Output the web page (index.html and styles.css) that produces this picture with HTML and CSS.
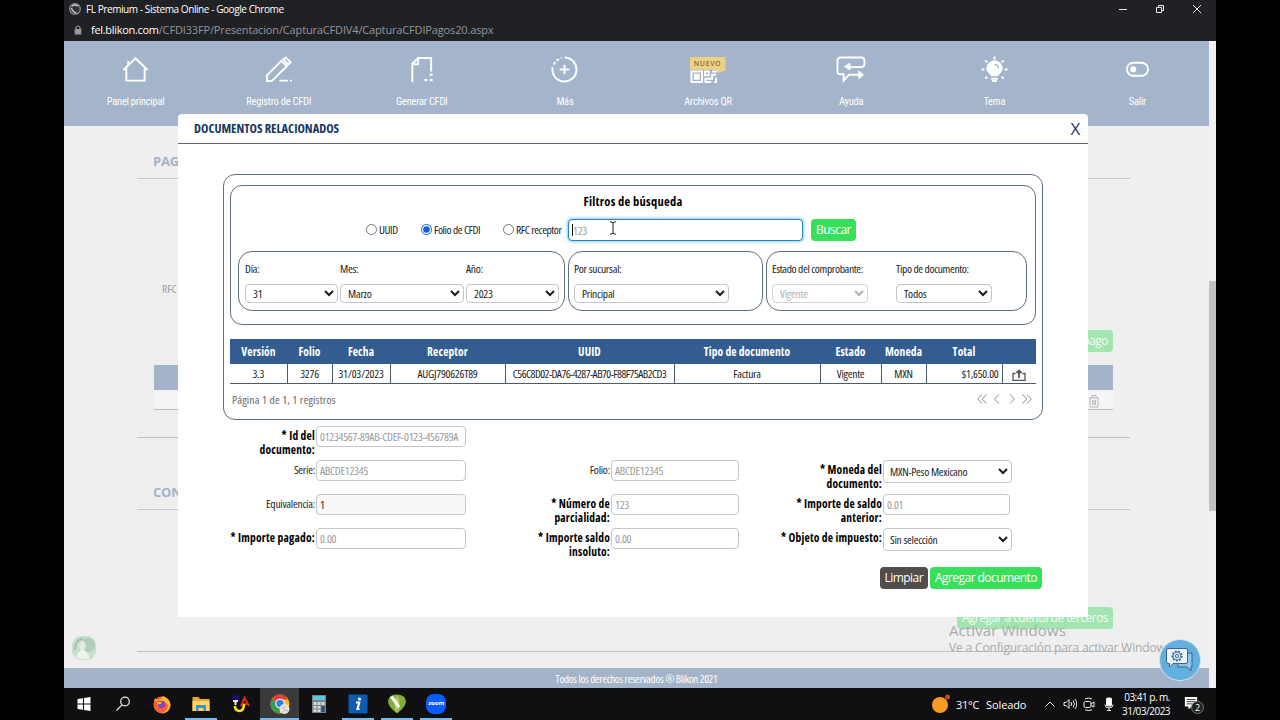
FILE: index.html
```html
<!DOCTYPE html>
<html lang="es">
<head>
  <meta charset="UTF-8" />
  <meta name="viewport" content="width=device-width, initial-scale=1.0"/>
  <title>FL Premium - Sistema Online</title>
  <link rel="stylesheet" href="styles.css">
</head>
<body>
  <div class="screen">
    <!-- browser window -->
    <header class="browser">
      <div class="titlebar">
        <svg class="favicon" viewBox="0 0 14 14"><circle cx="7" cy="7" r="5.3" fill="#333" stroke="#8d8d8f" stroke-width="1.3"/><path d="M4 4q3-2 6 0M3.5 6q1 4 5 5" fill="none" stroke="#ccc" stroke-width="1.3"/></svg>
        <span class="window-title">FL Premium - Sistema Online - Google Chrome</span>
        <div class="window-buttons">
          <svg viewBox="0 0 10 10"><path d="M1 5.5h8"/></svg>
          <svg viewBox="0 0 10 10"><path d="M1.5 3.5h5v5h-5zM3.5 3.5v-2h5v5h-2"/></svg>
          <svg viewBox="0 0 10 10"><path d="M1 1l8 8M9 1l-8 8"/></svg>
        </div>
      </div>
      <div class="urlbar">
        <svg class="lock" viewBox="0 0 8 10"><path d="M2 5V3a2 2 0 0 1 4 0v2" fill="none" stroke="#9a9a9d" stroke-width="1.2"/><rect x=".7" y="4" width="6.6" height="5.5" fill="#9a9a9d"/></svg>
        <p><b>fel.blikon.com</b>/CFDI33FP/Presentacion/CapturaCFDIV4/CapturaCFDIPagos20.aspx</p>
      </div>
    </header>

    <div class="viewport">
      <div class="page">
        <nav class="menu">
          <a><svg viewBox="0 0 28 28"><path d="M1.5 14.5L14 2.500l12.500 12M4.500 13v12.500h19V13M6.500 9V5"/></svg>Panel principal</a>
          <a><svg viewBox="0 0 28 28"><path d="M2 26v-6L17 5l5.500 5.500-15 15zM19 3.500l2.500-2 5 5-2.500 2.500zM15 25.500h9M26 25.500h2"/></svg>Registro de CFDI</a>
          <a><svg viewBox="0 0 28 28"><path d="M4.500 27V8l6-6H24v14M4.500 8.500h6V2"/><path d="M22.500 19.500h3M22.500 25h3M17 25h3" stroke-width="2.500"/></svg>Generar CFDI</a>
          <a><svg viewBox="0 0 28 28"><path d="M14 1.500a12.500 12.500 0 1 1-12.300 10M14 9v10M9 14h10"/><path d="M3 9A12.500 12.500 0 0 1 11 2" stroke-dasharray="3 2"/></svg>Más</a>
          <a class="qr"><svg viewBox="0 0 28 28"><path d="M1.500 16h11v11h-11z"/><path d="M5 19.500h4v4H5z" fill="#fff"/><path d="M15.500 21v-5h4v4h-3M23 16h5M27 19.500h-4v4h-7v3.500h6M27 22.500V27h-2"/></svg>Archivos QR<span class="nuevo">NUEVO</span></a>
          <a><svg viewBox="0 0 32 28"><path d="M10 11.500h16.500a3 3 0 0 0 3-3V4.500a3 3 0 0 0-3-3H4.500a3 3 0 0 0-3 3V16a3 3 0 0 0 3 3H8v6.500l5.500-6H27"/><path d="M14.500 7.500v7L9 11zM23.500 15.500v8L28.500 19.500z" fill="#fff" stroke-width="1"/></svg>Ayuda</a>
          <a><svg viewBox="0 0 28 28"><path d="M10.500 20.500c0-2-4.500-3-4.500-7.500a8 8 0 0 1 16 0c0 4.500-4.500 5.500-4.500 7.500z" fill="#fff" stroke-width="1"/><path d="M10.500 23.500h7M11.500 26h5M14 .5v3M.5 14h3M24.500 14h3M4.500 4.500l2 2M23.500 4.500l-2 2M4.500 23.500l2-2M23.500 23.500l-2-2"/><path d="M14 9q4 0 4.500 4" stroke="#a5b4cb" stroke-width="1.3"/></svg>Tema</a>
          <a><svg viewBox="0 0 28 28"><rect x="3" y="7" width="22" height="13.500" rx="6.700"/><circle cx="9.500" cy="13.700" r="3.200" fill="#fff" stroke="none"/></svg>Salir</a>
        </nav>

        <main class="payment">
          <h2>PAGOS</h2>
          <div class="payment-form">
            <span class="rfc">RFC emisor:</span>
            <button class="btn">Agregar pago</button>
          </div>
          <div class="payment-grid">
            <div class="grid-head"></div>
            <div class="grid-row">
              <svg viewBox="0 0 12 14"><path d="M1 4h10M4 4V1.500h4V4M2 4v9h8V4M4.500 6v5M6 6v5M7.500 6v5" fill="none" stroke="#b9b9ba"/></svg>
            </div>
          </div>
          <hr>
          <h2 class="second">CONCEPTOS</h2>
          <button class="btn account-btn">Agregar a cuenta de terceros</button>
          <hr>
        </main>
        <footer class="footer">Todos los derechos reservados ® Blikon 2021</footer>
      </div>
      <div class="scrollbar"><div class="thumb"></div></div>

      <svg class="avatar" viewBox="0 0 26 26"><rect x="1" y="1" width="24" height="24" rx="9" fill="#c9dfcd"/><circle cx="17" cy="10" r="7" fill="#b1ceb8"/><path d="M5 23q2-7 6-8t8 8q-7 3-14-1" fill="#eef3ec"/><ellipse cx="11.500" cy="11" rx="3" ry="5" fill="#e3eae1"/><path d="M4 15Q4 4 12 4" fill="none" stroke="#a8bfad" stroke-width="2"/></svg>

      <div class="activate">
        <p class="activate-title">Activar Windows</p>
        <p>Ve a Configuración para activar Windows.</p>
      </div>

      <!-- related documents -->
      <section class="modal">
        <div class="modal-header">
          <h3>DOCUMENTOS RELACIONADOS</h3>
          <span class="close">X</span>
        </div>

        <div class="search-box">
          <div class="filters">
            <h4>Filtros de búsqueda</h4>
            <div class="search-row">
              <label class="opt-uuid"><input type="radio" name="tipo" />UUID</label>
              <label class="opt-folio"><input type="radio" name="tipo" checked />Folio de CFDI</label>
              <label class="opt-rfc"><input type="radio" name="tipo" />RFC receptor</label>
              <div class="search-field">
                <input type="text" placeholder="123" />
                <span class="caret"></span>
                <svg class="pointer" viewBox="0 0 8 14"><path d="M1 1h2l1 1 1-1h2M4 2v10M1 13h2l1-1 1 1h2" fill="none" stroke="#222"/></svg>
              </div>
              <button class="btn search-btn">Buscar</button>
            </div>
            <div class="filter-groups">
              <div class="group date-group">
                <label>Día:<select><option>31</option></select></label>
                <label>Mes:<select><option>Marzo</option></select></label>
                <label>Año:<select><option>2023</option></select></label>
              </div>
              <div class="group branch-group">
                <label>Por sucursal:<select><option>Principal</option></select></label>
              </div>
              <div class="group type-group">
                <label>Estado del comprobante:<select disabled><option>Vigente</option></select></label>
                <label>Tipo de documento:<select><option>Todos</option></select></label>
              </div>
            </div>
          </div>

          <table>
            <colgroup>
              <col class="c1"><col class="c2"><col class="c3"><col class="c4"><col class="c5">
              <col class="c6"><col class="c7"><col class="c8"><col class="c9"><col class="c10">
            </colgroup>
            <thead>
              <tr><th>Versión</th><th>Folio</th><th>Fecha</th><th>Receptor</th><th>UUID</th><th>Tipo de documento</th><th>Estado</th><th>Moneda</th><th>Total</th><th></th></tr>
            </thead>
            <tbody>
              <tr>
                <td>3.3</td><td>3276</td><td>31/03/2023</td><td>AUGJ790626T89</td>
                <td class="uuid">C56C8D02-DA76-4287-AB70-F88F75AB2CD3</td>
                <td>Factura</td><td>Vigente</td><td>MXN</td><td class="total">$1,650.00</td>
                <td><svg class="upload" viewBox="0 0 14 12"><path d="M3.500 4.500H1v7h12v-7h-2.500" stroke-width="1.300"/><path d="M7 9V2M4.500 4L7 1.500 9.500 4" stroke-width="1.800"/></svg></td>
              </tr>
            </tbody>
          </table>

          <div class="pager">
            <span>Página 1 de 1, 1 registros</span>
            <div class="pager-arrows">
              <svg viewBox="0 0 10 10"><path d="M5 .5L.7 5 5 9.500M9.500 .5L5.200 5l4.300 4.500"/></svg>
              <svg viewBox="0 0 10 10"><path d="M7 .5L2.500 5 7 9.500"/></svg>
              <svg viewBox="0 0 10 10"><path d="M3 .5L7.500 5 3 9.500"/></svg>
              <svg viewBox="0 0 10 10"><path d="M.5 .5L4.800 5 .5 9.500M5 .5L9.300 5 5 9.500"/></svg>
            </div>
          </div>
        </div>

        <form class="doc-form">
          <label class="required">* Id del<br>documento:</label>
          <input type="text" placeholder="01234567-89AB-CDEF-0123-456789A" />
          <label></label><span></span>
          <label></label><span></span>

          <label>Serie:</label>
          <input type="text" placeholder="ABCDE12345" />
          <label>Folio:</label>
          <input type="text" placeholder="ABCDE12345" />
          <label class="required">* Moneda del<br>documento:</label>
          <select><option>MXN-Peso Mexicano</option></select>

          <label>Equivalencia:</label>
          <input type="text" class="readonly" value="1" readonly />
          <label class="required">* Número de<br>parcialidad:</label>
          <input type="text" placeholder="123" />
          <label class="required">* Importe de saldo<br>anterior:</label>
          <input type="text" class="balance" placeholder="0.01" />

          <label class="required">* Importe pagado:</label>
          <input type="text" placeholder="0.00" />
          <label class="required">* Importe saldo<br>insoluto:</label>
          <input type="text" placeholder="0.00" />
          <label class="required">* Objeto de impuesto:</label>
          <select><option>Sin selección</option></select>
        </form>

        <div class="actions">
          <button class="btn btn-dark">Limpiar</button>
          <button class="btn">Agregar documento</button>
        </div>
      </section>

      <div class="chat">
        <svg viewBox="0 0 30 26"><path d="M22 6h5v14h-1v4l-4-4h-9v-3" fill="#8fc4e8" stroke="#39658f"/><path d="M3 1.500h18a1.500 1.500 0 0 1 1.500 1.500v12a1.500 1.500 0 0 1-1.500 1.500H8L4.500 20v-3.500H3A1.500 1.500 0 0 1 1.500 15V3A1.500 1.500 0 0 1 3 1.500z" fill="#eaf5fc" stroke="#39658f"/><circle cx="12" cy="9" r="4.800" fill="none" stroke="#39658f" stroke-width="1.500" stroke-dasharray="2 1.300"/><circle cx="12" cy="9" r="3.800" fill="none" stroke="#39658f" stroke-width=".8"/><circle cx="12" cy="9" r="1.600" fill="none" stroke="#39658f"/></svg>
      </div>
    </div>

    <!-- windows taskbar -->
    <div class="taskbar">
      <div class="app"><svg viewBox="0 0 20 20"><path d="M3.500 5L9 4.200v5.300H3.500zM10 4l6.500-1v6.500H10zM3.500 10.500H9v5.300L3.500 15zM10 10.500h6.500V17L10 16z" fill="#fff"/></svg></div>
      <div class="app"><svg viewBox="0 0 20 20"><circle cx="12" cy="7.500" r="4.300" fill="none" stroke="#eee" stroke-width="1.200"/><path d="M9 10.800L3.500 16.500" stroke="#eee" stroke-width="1.200"/></svg></div>
      <div class="app"><svg viewBox="0 0 20 20"><circle cx="10" cy="11" r="8.500" fill="#ff6b2c"/><path d="M2 8L3 4l3 3q3-1 5-5 7 3 7.500 9-1 8-9 8.500Q17 14 12 7 4 7 2 8z" fill="#ffb52e"/><path d="M2 8q0 10 8 11 6-2 6-8l-3-3-9-1z" fill="#fb5b38"/><circle cx="9.500" cy="10.500" r="3.700" fill="#8144b5"/><path d="M5 8h5l-1 2q-3 0-4 1" fill="#ffad32"/></svg></div>
      <div class="app open"><svg viewBox="0 0 20 20"><path d="M1.500 3h6l1.500 2h9.500v12h-17z" fill="#e8a93a"/><path d="M1.500 7h17v10h-17z" fill="#ffd566"/><path d="M5 11h10v6h-2.500v-3h-5v3H5z" fill="#4390c4"/></svg></div>
      <div class="app"><svg viewBox="0 0 20 20"><circle cx="6" cy="5" r="4" fill="#171070"/><path d="M3 7h5M5.500 7v4" stroke="#f5ef9b" stroke-width="2"/><path d="M11 12l3.500-8 4.500 8M13 10h4" fill="none" stroke="#dd2d16" stroke-width="2"/><path d="M5 12q0 5 5 5 4-1 4-7" fill="none" stroke="#ffdf2a" stroke-width="2.500"/></svg></div>
      <div class="app open active"><svg viewBox="0 0 20 20"><circle cx="10" cy="10" r="9.500" fill="#f5be2b"/><path d="M10 10L1.700 5.300A9.500 9.500 0 0 1 18.300 5.500H10z" fill="#df4135"/><path d="M10 10L1.700 5.300A9.500 9.500 0 0 0 9.500 19.500L14 12z" fill="#3a9b50"/><circle cx="10" cy="9.500" r="4.800" fill="#fff"/><circle cx="10" cy="9.500" r="3.700" fill="#377ee0"/><circle cx="14.500" cy="15" r="5" fill="#e7e4de"/><path d="M11.500 13l2 2 2-3M13 18l2-2 3 1" fill="none" stroke="#b1afab"/></svg></div>
      <div class="app"><svg viewBox="0 0 20 20"><path d="M3 1h14v18H3z" fill="#7c8487"/><path d="M4 2h12v4H4z" fill="#56c7e5"/><path d="M4.500 8h3v3h-3zM8.500 8h3v3h-3zM12.500 8h3v3h-3zM4.500 12h3v2.500h-3zM8.500 12h3v2.500h-3zM4.500 15.500h3V18h-3zM8.500 15.500h3V18h-3z" fill="#d6dcdd"/><path d="M12.500 12h3v6h-3z" fill="#164d7c"/></svg></div>
      <div class="app open"><svg viewBox="0 0 20 20"><rect x=".5" y=".5" width="19" height="19" rx="1" fill="#0d5bb0"/><circle cx="11.500" cy="5" r="1.600" fill="#fff"/><path d="M8 8.500h3.200L9.500 15h2" fill="none" stroke="#fff" stroke-width="2.200"/></svg></div>
      <div class="app open"><svg viewBox="0 0 20 20"><path d="M10 19.500Q1 13 1 7q1-7 9-6.500Q18 .5 19 7q0 6-9 12.500z" fill="#7fae37"/><path d="M10 19Q5 10 10 1q5 9 0 18" fill="#b4cb68"/><path d="M3 3l3-1 7 10-1 2-2-1z" fill="#fff"/></svg></div>
      <div class="app open"><span class="zoom-icon">zoom</span></div>

      <div class="tray">
        <svg class="sun" viewBox="0 0 20 20"><circle cx="9" cy="11" r="8" fill="#f69b23"/><circle cx="16.500" cy="3" r="2.500" fill="#c2472c"/></svg>
        <span class="temp">31°C</span><span class="weather">Soleado</span>
        <svg class="tray-icon" viewBox="0 0 14 14"><path d="M2.500 9.500L7 5l4.500 4.500"/></svg>
        <svg class="tray-icon" viewBox="0 0 14 14"><path d="M1 5.500h2l3-3v9l-3-3H1zM8 5q1.500 2 0 4M10 3.500q3 3.500 0 7M12 2q3.500 5 0 10"/></svg>
        <svg class="tray-icon" viewBox="0 0 14 14"><rect x="2" y="4.500" width="7" height="6" rx="1.500"/><path d="M9 7l3-2v5L9 8.500M3 2q4-2 7 0M3 12.800q4 1.500 7 0"/></svg>
        <svg class="tray-icon" viewBox="0 0 14 14"><rect x="4.500" y="1" width="5" height="8" rx="1" fill="#fff"/><path d="M3 7.500q0 3.500 4 3.500t4-3.500M7 11v2.500M5 13.500h4"/></svg>
        <div class="clock">03:41 p. m.<br>31/03/2023</div>
        <div class="notes">
          <svg viewBox="0 0 16 16"><path d="M1 1h14v11H9l-4 3v-3H1z" fill="#fff"/><path d="M3 4h10M3 6.500h10M3 9h6" stroke="#222"/></svg>
          <span class="count">2</span>
        </div>
      </div>
    </div>
  </div>
</body>
</html>
```
FILE: styles.css
```css
* {
  margin: 0;
  padding: 0;
  box-sizing: border-box;
}
body {
  background: #000;
  font-family: "Open Sans", sans-serif;
  overflow: hidden;
}
.screen {
  width: 1152px;
  height: 720px;
  margin: 0 auto;
  display: flex;
  flex-direction: column;
}

/* browser */
.browser {
  height: 41px;
  background: #202124;
  color: #fff;
}
.titlebar {
  display: flex;
  align-items: center;
  height: 18px;
  padding-left: 4px;
}
.favicon {
  width: 14px;
  height: 14px;
  margin-right: 4px;
}
.window-title {
  font-size: 10px;
  letter-spacing: -0.42px;
}
.window-buttons {
  display: flex;
  gap: 27px;
  margin-left: auto;
  margin-right: 14px;
}
.window-buttons svg {
  width: 10px;
  height: 10px;
  fill: none;
  stroke: #eee;
}
.urlbar {
  display: flex;
  align-items: center;
  height: 23px;
  padding-left: 10px;
  font-size: 11px;
  color: #96979a;
  letter-spacing: -0.15px;
}
.urlbar b {
  color: #fff;
  font-weight: 500;
  letter-spacing: -0.3px;
}
.lock {
  width: 8px;
  height: 10px;
  margin-right: 9px;
}

/* page behind the dialog */
.viewport {
  position: relative;
  display: flex;
  height: 647px;
  background: #efeff0;
}
.page {
  width: 1145px;
  display: flex;
  flex-direction: column;
}
.menu {
  display: grid;
  grid-template-columns: repeat(8, 1fr);
  height: 85px;
  padding-top: 15px;
  background: #a4b4ca;
}
.menu a {
  position: relative;
  display: flex;
  flex-direction: column;
  align-items: center;
  gap: 12px;
  color: #fff;
  font-family: Roboto, sans-serif;
  font-stretch: 75%;
  font-size: 10.5px;
  line-height: 14px;
  letter-spacing: -0.25px;
}
.menu svg {
  height: 27px;
  fill: none;
  stroke: #fff;
  stroke-width: 2;
}
.menu .qr svg {
  margin-left: -9px;
}
.nuevo {
  position: absolute;
  top: 1px;
  left: 53px;
  width: 36px;
  height: 16px;
  background: #ecd184;
  clip-path: polygon(0 0, 100% 0, 100% 85%, 78% 100%, 74% 80%, 0 80%);
  color: #83733e;
  font-family: "Open Sans", sans-serif;
  font-stretch: 100%;
  font-size: 7px;
  font-weight: 600;
  letter-spacing: 0.6px;
  line-height: 13px;
  text-align: center;
}
.payment {
  flex: 1;
  padding: 0 79px 0 73px;
}
.payment h2 {
  height: 53px;
  padding: 24px 0 0 16px;
  border-bottom: 1px solid #c9c9cb;
  color: #a4b2c7;
  font-size: 13px;
  line-height: 22px;
  letter-spacing: -0.2px;
}
.payment-form {
  display: flex;
  justify-content: space-between;
  align-items: flex-end;
  height: 173px;
  padding: 0 17px 0 25px;
}
.rfc {
  align-self: flex-start;
  padding-top: 102px;
  font-stretch: 75%;
  font-size: 11.5px;
  color: #9b9b9e;
}
.payment .btn {
  background: #a2e5b0;
  color: #f2fbf4;
}
.payment-grid {
  margin: 13px 17px 27px;
}
.grid-head {
  height: 25px;
  background: #a4b3c9;
}
.grid-row {
  display: flex;
  justify-content: flex-end;
  height: 20px;
  padding: 4px 13px 0 0;
  background: #f5f5f6;
  border-bottom: 1px solid #b5bac4;
}
.grid-row svg {
  width: 12px;
  height: 14px;
}
.payment hr {
  border: none;
  border-top: 1px solid #c0c0c2;
}
.payment h2.second {
  height: 72px;
  padding-top: 43px;
}
.account-btn {
  display: block;
  margin: 97px 17px 22px auto;
}
.footer {
  height: 20px;
  background: #a4b3c8;
  color: #fff;
  font-stretch: 75%;
  font-size: 11px;
  line-height: 22px;
  letter-spacing: -0.27px;
  text-align: center;
}
.scrollbar {
  width: 7px;
  background: #f1f1f2;
  padding-top: 240px;
}
.thumb {
  height: 230px;
  background: #c1c1c3;
}
.avatar {
  position: absolute;
  left: 7px;
  top: 594px;
  width: 26px;
  height: 26px;
}
.activate {
  position: absolute;
  left: 885px;
  top: 582px;
  color: #a9a9ab;
  font-size: 12px;
  line-height: 18px;
  letter-spacing: -0.15px;
  white-space: nowrap;
}
.activate-title {
  font-size: 15px;
  line-height: 14px;
  margin-bottom: 2px;
  letter-spacing: 0.1px;
}
.chat {
  position: absolute;
  left: 1095px;
  top: 598px;
  width: 42px;
  height: 42px;
  border-radius: 50%;
  border: 1px solid #d3e6f3;
  background: #63afdd;
  display: flex;
  align-items: center;
  justify-content: center;
}
.chat svg {
  width: 30px;
  height: 26px;
}

/* dialog */
.modal {
  position: absolute;
  left: 114px;
  top: 73px;
  width: 910px;
  height: 503px;
  background: #fff;
  border-radius: 4px 4px 0 0;
  font-stretch: 75%;
  font-size: 11.5px;
  letter-spacing: -0.25px;
  color: #1c1c1c;
}
.modal-header {
  display: flex;
  justify-content: space-between;
  height: 30px;
  padding: 0 8px 0 16px;
  border-bottom: 1px solid #5f6874;
  line-height: 29px;
}
.modal-header h3 {
  color: #12375f;
  font-size: 12.5px;
  letter-spacing: 0;
}
.close {
  color: #2a3560;
  font-size: 17px;
  font-stretch: 100%;
  line-height: 30px;
}
.btn {
  height: 22px;
  padding: 0 5px;
  border: none;
  border-radius: 4px;
  background: #38df5b;
  color: #fff;
  font-family: "Open Sans", sans-serif;
  font-size: 12px;
  line-height: 20px;
  letter-spacing: -0.55px;
  white-space: nowrap;
}
.search-box {
  width: 820px;
  height: 246px;
  margin: 30px 0 0 45px;
  padding: 10px 6px;
  border: 1px solid #5f6f80;
  border-radius: 12px;
}
.filters {
  height: 140px;
  padding: 7px;
  border: 1px solid #5f6f80;
  border-radius: 12px;
}
.filters h4 {
  color: #000;
  font-size: 12.5px;
  line-height: 18px;
  letter-spacing: 0.25px;
  text-align: center;
}
.search-row {
  display: flex;
  align-items: center;
  height: 22px;
  margin: 8px 0 10px 128px;
}
.search-row label {
  display: flex;
  align-items: center;
  gap: 2px;
  padding-bottom: 2px;
  letter-spacing: -0.4px;
  white-space: nowrap;
}
.search-row input[type="radio"] {
  width: 11px;
  height: 11px;
  accent-color: #0b62d6;
}
.opt-uuid {
  width: 55px;
}
.opt-folio {
  width: 82px;
}
.opt-rfc {
  width: 65px;
}
input[type="text"],
select {
  border: 1px solid #c6c6c8;
  border-radius: 4px;
  background: #fff;
  color: #1c1c1c;
  font-family: "Open Sans", sans-serif;
  font-stretch: 75%;
  font-size: 11.5px;
  letter-spacing: -0.25px;
}
input[type="text"]::placeholder {
  color: #999;
}
.search-field {
  position: relative;
  width: 235px;
  height: 22px;
}
.search-field input[type="text"] {
  width: 235px;
  height: 22px;
  padding-left: 4px;
  border-color: #2f83b5;
  box-shadow: 0 0 3px 1px #7fcff5;
}
.caret {
  position: absolute;
  left: 4px;
  top: 5px;
  width: 1px;
  height: 12px;
  background: #111;
}
.pointer {
  position: absolute;
  left: 41px;
  top: 2px;
  width: 8px;
  height: 14px;
}
.search-btn {
  width: 45px;
  margin-left: 8px;
}
.filter-groups {
  display: flex;
  gap: 3px;
}
.group {
  display: flex;
  height: 60px;
  padding: 9px 6px;
  border: 1px solid #5f6f80;
  border-radius: 14px;
}
.group label {
  display: flex;
  flex-direction: column;
  gap: 7px;
  line-height: 16px;
  white-space: nowrap;
}
select {
  height: 22px;
  padding-left: 3px;
}
.date-group {
  width: 327px;
  gap: 2px;
}
.date-group select {
  width: 93px;
}
.date-group label:nth-child(2) select {
  width: 124px;
}
.branch-group {
  width: 195px;
  padding-left: 5px;
}
.branch-group select {
  width: 155px;
}
.type-group {
  width: 261px;
  gap: 28px;
  padding-left: 5px;
}
.type-group label {
  width: 96px;
  letter-spacing: -0.35px;
}
.type-group select {
  width: 96px;
}
select:disabled {
  color: #999;
  opacity: 0.75;
}

table {
  width: 806px;
  margin-top: 14px;
  table-layout: fixed;
  border-collapse: collapse;
  white-space: nowrap;
}
th {
  height: 25px;
  background: #335d91;
  color: #fff;
  font-size: 11.5px;
  letter-spacing: 0.1px;
}
td {
  height: 19px;
  padding-top: 1px;
  border: 1px solid #4d5c6b;
  border-top: none;
  text-align: center;
  line-height: 16px;
}
td:first-child {
  border-left: none;
}
td:last-child {
  border-right: none;
}
.c1 { width: 57px; }
.c2 { width: 45px; }
.c3 { width: 58px; }
.c4 { width: 115px; }
.c5 { width: 169px; }
.c6 { width: 146px; }
.c7 { width: 61px; }
.c8 { width: 45px; }
.c9 { width: 76px; }
.c10 { width: 34px; }
td.uuid {
  letter-spacing: -0.55px;
}
td.total {
  padding-right: 3px;
  text-align: right;
}
.upload {
  display: block;
  width: 14px;
  height: 12px;
  margin: 2px auto 0;
  fill: none;
  stroke: #555;
}
.pager {
  display: flex;
  justify-content: space-between;
  align-items: center;
  height: 32px;
  padding: 0 4px 0 2px;
  color: #666;
  letter-spacing: 0.2px;
}
.pager-arrows {
  display: flex;
  gap: 5px;
  margin-top: -2px;
}
.pager-arrows svg {
  width: 10px;
  height: 10px;
  fill: none;
  stroke: #8a8a8a;
}

.doc-form {
  display: grid;
  grid-template-columns: 87px 150px 143px 128px 142px 129px;
  grid-auto-rows: 34px;
  column-gap: 1px;
  margin: 6px 0 0 50px;
}
.doc-form label {
  padding-top: 3px;
  line-height: 14px;
  text-align: right;
  white-space: nowrap;
}
.doc-form .required {
  color: #000;
  font-weight: bold;
  letter-spacing: 0.2px;
}
.doc-form input {
  height: 21px;
  padding: 0 3px;
}
.doc-form input.balance {
  width: 127px;
}
.doc-form select {
  height: 23px;
  padding-left: 2px;
}
.doc-form input.readonly {
  background: #f8f8f8;
}
.actions {
  display: flex;
  gap: 2px;
  justify-content: flex-end;
  margin: 5px 46px 0 0;
}
.btn-dark {
  background: #504d4b;
}

/* taskbar */
.taskbar {
  display: flex;
  height: 32px;
  background: #101012;
  color: #fff;
}
.app {
  display: flex;
  align-items: center;
  justify-content: center;
  width: 39.2px;
  height: 32px;
}
.app svg {
  width: 20px;
  height: 20px;
}
.open {
  background: linear-gradient(#76b9ed, #76b9ed) center bottom / 32px 2px no-repeat;
}
.active {
  background-color: #3a3a3d;
  background-size: 39px 2px;
}
.zoom-icon {
  width: 20px;
  height: 20px;
  border-radius: 8px;
  background: #0b5cff;
  font-size: 6px;
  font-weight: bold;
  line-height: 19px;
  text-align: center;
}
.tray {
  display: flex;
  align-items: center;
  margin-left: auto;
  padding-right: 12px;
  font-size: 11px;
}
.sun {
  width: 20px;
  height: 20px;
  margin-right: 5px;
}
.temp {
  width: 30px;
  letter-spacing: -0.3px;
}
.weather {
  width: 57px;
  letter-spacing: -0.1px;
}
.tray-icon {
  width: 14px;
  height: 14px;
  margin-right: 5.5px;
  fill: none;
  stroke: #eee;
}
.clock {
  width: 48px;
  margin-left: 1px;
  font-size: 10px;
  line-height: 14px;
  letter-spacing: -0.5px;
  text-align: right;
  white-space: nowrap;
}
.notes {
  position: relative;
  width: 20px;
  height: 16px;
  margin-left: 14px;
}
.notes svg {
  width: 14px;
  height: 14px;
}
.count {
  position: absolute;
  left: 7px;
  top: 5px;
  width: 13px;
  height: 13px;
  border: 1px solid #777;
  border-radius: 50%;
  background: #222;
  font-size: 9px;
  line-height: 11px;
  text-align: center;
}
```
